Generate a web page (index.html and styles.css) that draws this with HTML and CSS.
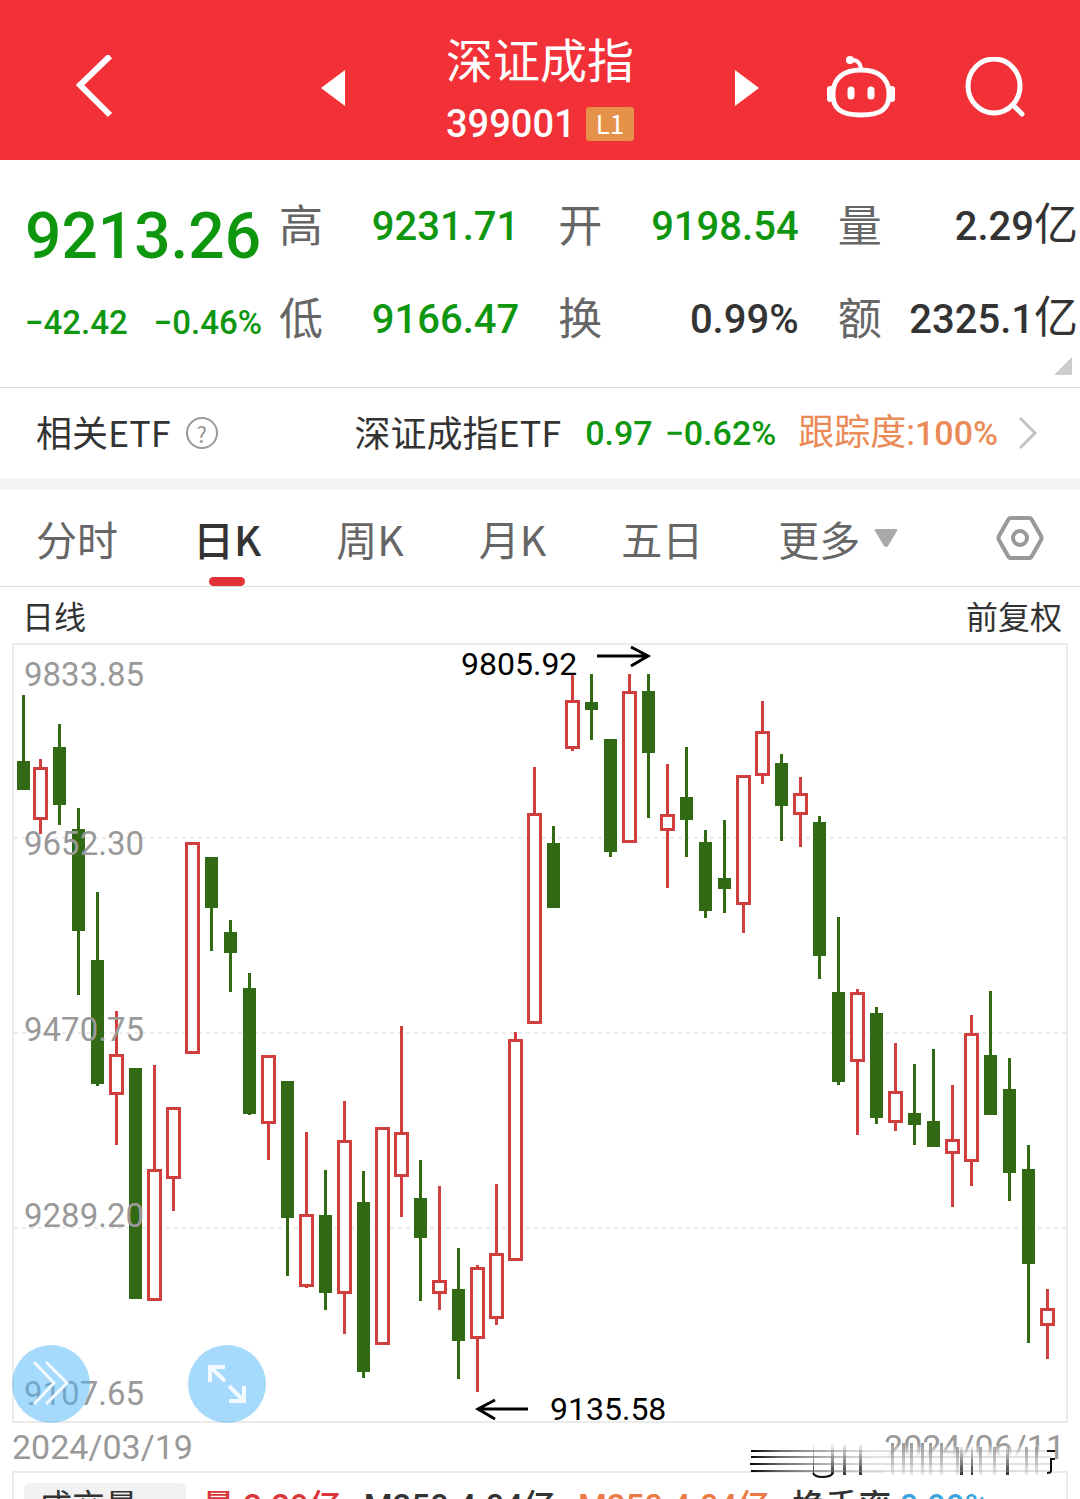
FILE: index.html
```
<!DOCTYPE html>
<html lang="zh-CN">
<head>
  <meta charset="UTF-8" />
  <meta name="viewport" content="width=device-width, initial-scale=1.0"/>
  <title>深证成指 399001</title>
  <link rel="stylesheet" href="styles.css">
</head>
<body>

  <header class="top-bar">
    <button class="icon-btn back-btn" aria-label="返回">
      <svg width="38" height="66" viewBox="0 0 38 66"><path d="M34 1 4 30l30 30" fill="none" stroke="#fff" stroke-width="6"/></svg>
    </button>
    <div class="stock-switch">
      <button class="icon-btn" aria-label="上一个">
        <svg width="24" height="36" viewBox="0 0 24 36"><path d="M24 0v36L0 18z" fill="#fff"/></svg>
      </button>
      <div class="stock-name">
        <h1>深证成指</h1>
        <div class="stock-code">399001 <span class="level">L1</span></div>
      </div>
      <button class="icon-btn" aria-label="下一个">
        <svg width="24" height="36" viewBox="0 0 24 36"><path d="M0 0v36l24-18z" fill="#fff"/></svg>
      </button>
    </div>
    <div class="top-actions">
      <button class="icon-btn" aria-label="智能助手">
        <svg width="70" height="66" viewBox="0 0 70 66" fill="none" stroke="#fff" stroke-width="5">
          <path d="M35 15c-17 0-27 8-28 22-1 17 8 23 28 23s29-6 28-23c-1-14-11-22-28-22z"/>
          <path d="M35 15c0-6-3-10-9-10" stroke-width="4"/>
          <circle cx="24" cy="5" r="4" fill="#fff" stroke="none"/>
          <path d="M4 34v10M66 34v10" stroke-width="6" stroke-linecap="round"/>
          <path d="M25 35v6M45 35v6" stroke-width="7" stroke-linecap="round"/>
        </svg>
      </button>
      <button class="icon-btn" aria-label="搜索">
        <svg width="62" height="62" viewBox="0 0 62 62" fill="none" stroke="#fff" stroke-width="5">
          <ellipse cx="29" cy="29" rx="26" ry="27"/>
          <path d="m48 48 9 9" stroke-linecap="round"/>
        </svg>
      </button>
    </div>
  </header>

  <section class="quote">
    <div class="quote-main">
      <div class="price">9213.26</div>
      <div class="change"><span>−42.42</span><span>−0.46%</span></div>
    </div>
    <dl class="stats">
      <div><dt>高</dt><dd class="down">9231.71</dd></div>
      <div><dt>开</dt><dd class="down">9198.54</dd></div>
      <div><dt>量</dt><dd>2.29<span>亿</span></dd></div>
      <div><dt>低</dt><dd class="down">9166.47</dd></div>
      <div><dt>换</dt><dd>0.99%</dd></div>
      <div><dt>额</dt><dd>2325.1<span>亿</span></dd></div>
    </dl>
    <span class="expand-corner"></span>
  </section>

  <section class="etf">
    <span class="etf-label">相关ETF</span>
    <button class="help-btn" aria-label="说明">?</button>
    <a class="etf-link" href="#">
      <span class="etf-label">深证成指ETF</span>
      <span class="num down etf-price">0.97</span>
      <span class="num down">−0.62%</span>
      <span class="num track"><span>跟踪度:</span>100%</span>
      <svg width="20" height="34" viewBox="0 0 20 34"><path d="m2 2 15 15L2 32" fill="none" stroke="#c4c4c4" stroke-width="3"/></svg>
    </a>
  </section>

  <nav class="tabs">
    <a href="#">分时</a>
    <a href="#" class="active">日K</a>
    <a href="#">周K</a>
    <a href="#">月K</a>
    <a href="#">五日</a>
    <a href="#" class="more">更多
      <svg width="24" height="18" viewBox="0 0 24 18"><path d="M2 0h20q2 0 1 2L14 17q-2 2-4 0L1 2Q0 0 2 0z" fill="#aaa"/></svg>
    </a>
    <button class="icon-btn settings-btn" aria-label="设置">
      <svg width="48" height="48" viewBox="0 0 48 48" fill="none" stroke="#999" stroke-width="4">
        <path d="M15 4h18q2 0 3 2l9 16q1 2 0 4l-9 16q-1 2-3 2H15q-2 0-3-2L3 26q-1-2 0-4l9-16q1-2 3-2z"/>
        <circle cx="24" cy="24" r="7"/>
      </svg>
    </button>
  </nav>

  <div class="chart-head">
    <span>日线</span>
    <span>前复权</span>
  </div>

  <main class="chart">
    <svg class="kline" viewBox="12 643 1056 780" role="img" aria-label="日K线图">
      <rect class="frame" x="13" y="644" width="1054" height="778"/>
      <path class="grid" d="M14 838h1052M14 1033h1052M14 1228h1052"/>
      <g id="candles"></g>
      <g class="axis">
        <text x="24" y="686">9833.85</text>
        <text x="24" y="855">9652.30</text>
        <text x="24" y="1041">9470.75</text>
        <text x="24" y="1227">9289.20</text>
        <text x="24" y="1405">9107.65</text>
      </g>
      <g class="extremes">
        <text x="461" y="675">9805.92</text>
        <path d="M597 656h50M631 647l17 9-17 10"/>
        <text x="550" y="1420">9135.58</text>
        <path d="M528 1409h-49M495 1400l-17 9 17 10"/>
      </g>
    </svg>
    <button class="round-btn" aria-label="展开工具">
      <svg width="78" height="78" viewBox="0 0 78 78"><path d="m22 17 20 21-20 21M34 17l21 21-21 21"/></svg>
    </button>
    <button class="round-btn fullscreen-btn" aria-label="全屏">
      <svg width="78" height="78" viewBox="0 0 78 78"><path class="bold" d="M37 36 22 22M22 37V22h15M41 41l15 15M56 41v15H41"/></svg>
    </button>
  </main>

  <div class="dates">
    <span>2024/03/19</span>
    <span>2024/06/11</span>
    <svg class="smudge" width="319" height="60" viewBox="0 0 319 60" fill="none" aria-hidden="true">
      <defs>
        <linearGradient id="cover" x1="0" y1="0" x2="0" y2="1">
          <stop offset="0" stop-color="#fff" stop-opacity="0"/>
          <stop offset=".4" stop-color="#fff"/>
        </linearGradient>
        <linearGradient id="drip" x1="0" y1="0" x2="0" y2="1">
          <stop offset="0" stop-color="#333" stop-opacity="0"/>
          <stop offset="1" stop-color="#333"/>
        </linearGradient>
        <linearGradient id="softDrip" x1="0" y1="0" x2="0" y2="1">
          <stop offset="0" stop-color="#999"/>
          <stop offset="1" stop-color="#999" stop-opacity=".2"/>
        </linearGradient>
        <linearGradient id="streak">
          <stop offset="0" stop-color="#000"/>
          <stop offset=".1" stop-color="#444" stop-opacity=".8"/>
          <stop offset=".4" stop-color="#999" stop-opacity=".3"/>
          <stop offset="1" stop-color="#999" stop-opacity=".3"/>
        </linearGradient>
      </defs>
      <path d="M134 21h169v32H134z" fill="url(#cover)"/>
      <path d="M142 20h3v32h-3zM153 20h3v32h-3zM161 20h3v32h-3zM172 20h3v32h-3zM180 20h3v32h-3zM191 20h3v32h-3zM207 24h3v28h-3zM230 24h3v28h-3zM244 24h3v28h-3zM276 24h3v28h-3zM286 24h3v28h-3z" fill="url(#softDrip)"/>
      <path d="M82 20h3v31h-3zM94 20h3v32h-3zM110 20h3v32h-3zM211 24h3v28h-3zM222 24h2v28h-2zM257 24h3v28h-3zM64 20h1v30h-1z" fill="url(#drip)"/>
      <path d="M2 27h300v2H2zM2 33h300v2H2zM1 40h300v2H1zM2 47h300v2H2z" fill="url(#streak)"/>
      <path d="M64 50q2 4 9 4 9 0 11-4M298 28h8M306 36h-4v12q0 2-4 2" stroke="#111" stroke-width="2"/>
    </svg>
  </div>

  <section class="volume">
    <button class="volume-btn">成交量</button>
    <span class="up">量 2.29亿</span>
    <span>M250:4.04亿</span>
    <span class="orange">M250:4.04亿</span>
    <span>换手率 <b>0.99%</b></span>
  </section>

  <script>
    // [x, high, body top, body bottom, low, rising]
    const candles = [
      [23, 695, 761, 790, 790, 0], [40, 759, 767, 820, 834, 1], [59, 724, 747, 805, 825, 0],
      [78, 808, 829, 931, 995, 0], [97, 892, 960, 1084, 1086, 0], [116, 1011, 1054, 1095, 1145, 1],
      [135, 1068, 1068, 1299, 1299, 0], [154, 1065, 1169, 1301, 1301, 1], [173, 1107, 1107, 1179, 1211, 1],
      [192, 842, 842, 1054, 1054, 1], [211, 857, 857, 908, 951, 0], [230, 920, 932, 953, 992, 0],
      [249, 973, 988, 1114, 1115, 0], [268, 1055, 1055, 1124, 1160, 1], [287, 1081, 1081, 1218, 1276, 0],
      [306, 1132, 1214, 1287, 1288, 1], [325, 1170, 1215, 1293, 1310, 0], [344, 1101, 1140, 1294, 1334, 1],
      [363, 1171, 1202, 1372, 1378, 0], [382, 1127, 1127, 1345, 1345, 1], [401, 1026, 1132, 1177, 1217, 1],
      [420, 1160, 1198, 1238, 1301, 0], [439, 1186, 1280, 1294, 1310, 1], [458, 1248, 1289, 1341, 1379, 0],
      [477, 1265, 1267, 1339, 1392, 1], [496, 1184, 1253, 1319, 1325, 1], [515, 1032, 1039, 1261, 1261, 1],
      [534, 767, 813, 1024, 1024, 1], [553, 826, 843, 908, 908, 0], [572, 674, 700, 749, 751, 1],
      [591, 674, 702, 710, 740, 0], [610, 739, 739, 852, 857, 0], [629, 674, 691, 843, 843, 1],
      [648, 674, 691, 753, 818, 0], [667, 764, 814, 831, 888, 1], [686, 747, 797, 820, 857, 0],
      [705, 830, 842, 911, 918, 0], [724, 820, 878, 889, 913, 0], [743, 775, 775, 905, 933, 1],
      [762, 701, 731, 776, 784, 1], [781, 754, 763, 806, 841, 0], [800, 777, 793, 815, 847, 1],
      [819, 816, 822, 956, 979, 0], [838, 917, 992, 1082, 1085, 0], [857, 989, 992, 1062, 1135, 1],
      [876, 1007, 1013, 1118, 1124, 0], [895, 1043, 1091, 1123, 1131, 1], [914, 1064, 1113, 1125, 1145, 0],
      [933, 1049, 1121, 1147, 1147, 0], [952, 1085, 1139, 1154, 1207, 1], [971, 1015, 1033, 1162, 1186, 1],
      [990, 991, 1055, 1115, 1115, 0], [1009, 1058, 1089, 1173, 1201, 0], [1028, 1145, 1169, 1264, 1343, 0],
      [1047, 1289, 1308, 1326, 1359, 1]
    ];

    function rect(cls, x, y, w, h) {
      return `<rect class="${cls}" x="${x}" y="${y}" width="${w}" height="${h}"/>`;
    }

    document.getElementById('candles').innerHTML = candles.map(([x, high, top, bottom, low, rising]) => {
      if (rising) {
        return rect('rise', x - 1, high, 3, low - high) +
          rect('rise', x - 7, top, 15, bottom - top) +
          rect('hollow', x - 4, top + 3, 9, bottom - top - 6);
      }
      return rect('fall', x - 1, high, 3, low - high) + rect('fall', x - 6, top, 13, bottom - top);
    }).join('');
  </script>

</body>
</html>
```
FILE: styles.css
```
* {
  box-sizing: border-box;
  margin: 0;
  padding: 0;
}

body {
  font-family: 'Noto Sans CJK SC', sans-serif;
  background-color: #fff;
  color: #333;
  height: 100vh;
  overflow: hidden;
}

a {
  color: inherit;
  text-decoration: none;
}

button {
  border: none;
  background: none;
  font-family: inherit;
  color: inherit;
  cursor: pointer;
}

svg {
  display: block;
}

.num {
  font-family: Roboto, 'Noto Sans CJK SC', sans-serif;
  font-weight: 500;
}

.down {
  color: #0f960f;
}

/* HEADER */
.top-bar {
  height: 160px;
  padding-top: 16px;
  background-color: #f23038;
  color: #fff;
  display: grid;
  grid-template-columns: 1fr 438px 1fr;
  align-items: center;
}

.back-btn {
  padding-left: 76px;
}

.stock-switch {
  display: flex;
  align-items: center;
  justify-content: space-between;
}

.stock-name h1 {
  font-size: 47px;
  font-weight: 400;
  line-height: 52px;
}

.stock-code {
  display: flex;
  align-items: center;
  justify-content: space-between;
  margin-top: 20px;
  font-family: Roboto, sans-serif;
  font-size: 38px;
  font-weight: 500;
  line-height: 40px;
}

.level {
  width: 48px;
  height: 34px;
  border-radius: 3px;
  background-color: #e5914a;
  font-family: 'Noto Sans CJK SC', sans-serif;
  font-size: 26px;
  font-weight: 400;
  line-height: 32px;
  text-align: center;
}

.top-actions {
  display: flex;
  align-items: center;
  justify-content: flex-end;
  gap: 69px;
  padding-right: 53px;
}

/* QUOTE */
.quote {
  position: relative;
  display: grid;
  grid-template-columns: 254px 1fr;
  padding: 37px 2px 37px 25px;
  border-bottom: 1px solid #ddd;
}

.quote-main {
  color: #0f960f;
  font-family: Roboto, sans-serif;
  font-weight: 500;
}

.price {
  margin-top: 4px;
  font-size: 64px;
  line-height: 72px;
}

.change {
  display: flex;
  gap: 26px;
  margin-top: 30px;
  font-size: 33px;
  line-height: 40px;
}

.stats {
  display: grid;
  grid-template-columns: repeat(3, 1fr);
  grid-auto-rows: 60px;
  column-gap: 39px;
  row-gap: 33px;
  font-family: Roboto, 'Noto Sans CJK SC', sans-serif;
}

.stats div {
  display: flex;
  justify-content: space-between;
  font-size: 44px;
  line-height: 60px;
}

.stats dt {
  color: #666;
}

.stats dd {
  font-size: 40px;
  font-weight: 500;
}

.stats dd span {
  font-size: 44px;
  font-weight: 400;
  line-height: 44px;
}

.expand-corner {
  position: absolute;
  right: 8px;
  bottom: 12px;
  border-left: 18px solid transparent;
  border-bottom: 18px solid #ccc;
}

/* RELATED ETF */
.etf {
  display: flex;
  align-items: center;
  height: 102px;
  padding: 0 42px 0 36px;
  border-bottom: 12px solid #f5f5f5;
  font-size: 36px;
}

.etf-label {
  padding-bottom: 4px;
}

.help-btn {
  width: 32px;
  height: 32px;
  margin-left: 15px;
  border: 2px solid #999;
  border-radius: 50%;
  color: #999;
  font-size: 22px;
  line-height: 27px;
}

.etf-link {
  display: flex;
  align-items: center;
  margin-left: auto;
  line-height: 48px;
}

.etf-link .num {
  font-size: 34px;
}

.etf-price {
  margin: 0 12px 0 24px;
}

.track {
  margin: 0 20px 0 22px;
  color: #ea8a56;
}

.track span {
  font-size: 36px;
  font-weight: 400;
  line-height: 36px;
}

/* TABS */
.tabs {
  display: flex;
  align-items: center;
  gap: 75px;
  height: 97px;
  padding: 0 36px;
  border-bottom: 1px solid #ddd;
  color: #666;
  font-size: 41px;
  line-height: 96px;
}

.tabs .active {
  position: relative;
  color: #333;
  font-weight: 500;
}

.tabs .active::after {
  content: '';
  position: absolute;
  left: 50%;
  bottom: 0;
  width: 36px;
  height: 9px;
  margin-left: -18px;
  border-radius: 5px;
  background-color: #e23236;
}

.more {
  display: flex;
  align-items: center;
  gap: 14px;
}

.settings-btn {
  margin-left: auto;
}

/* CHART */
.chart-head {
  display: flex;
  justify-content: space-between;
  height: 56px;
  padding: 0 18px 0 22px;
  font-size: 32px;
  line-height: 56px;
}

.chart {
  position: relative;
  margin: 0 12px;
}

.kline {
  width: 100%;
}

.frame {
  fill: none;
  stroke: #ebebeb;
  stroke-width: 2;
}

.grid {
  stroke: #ebebeb;
  stroke-width: 2;
  stroke-dasharray: 4 4;
}

.rise {
  fill: #d03e3e;
}

.hollow {
  fill: #fff;
}

.fall {
  fill: #326914;
}

.axis text {
  fill: #999;
  font-family: Roboto, sans-serif;
  font-size: 33px;
}

.extremes text {
  font-family: Roboto, sans-serif;
  font-size: 32px;
}

.extremes path {
  fill: none;
  stroke: #000;
  stroke-width: 3;
}

.round-btn {
  position: absolute;
  left: 0;
  bottom: 0;
  border-radius: 50%;
  background-color: rgba(77, 181, 249, 0.5);
}

.round-btn path {
  fill: none;
  stroke: #f2faff;
  stroke-width: 3;
}

.round-btn .bold {
  stroke-width: 4;
}

.fullscreen-btn {
  left: 176px;
}

.dates {
  position: relative;
  display: flex;
  justify-content: space-between;
  margin: 0 12px;
  padding-right: 3px;
  color: #999;
  font-family: Roboto, sans-serif;
  font-size: 34px;
  line-height: 48px;
}

.smudge {
  position: absolute;
  top: 0;
  right: 0;
}

/* VOLUME */
.volume {
  display: flex;
  gap: 22px;
  margin: 0 12px;
  padding: 10px;
  border: 2px solid #ebebeb;
  font-family: Roboto, 'Noto Sans CJK SC', sans-serif;
  font-size: 33px;
  font-weight: 500;
  line-height: 48px;
  white-space: nowrap;
}

.volume-btn {
  width: 162px;
  margin-right: -6px;
  padding-left: 15px;
  border-radius: 6px;
  background-color: #f2f2f2;
  font-size: 33px;
  line-height: 48px;
  text-align: left;
}

.up {
  color: #d8363a;
}

.orange {
  color: #ea7a45;
}

.volume b {
  color: #3aa5dc;
  font-weight: 500;
}
```
